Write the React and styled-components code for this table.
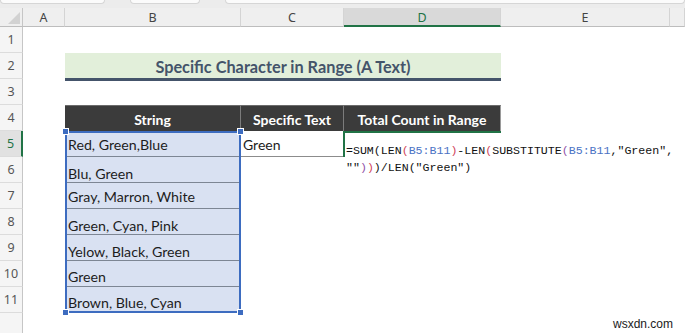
import React from 'react';
import styled, { createGlobalStyle, css } from 'styled-components';

const Global = createGlobalStyle`
  html, body { margin: 0; padding: 0; background: #fff; }
  body { width: 685px; height: 333px; overflow: hidden; font-family: Lato, "Open Sans", sans-serif; }
`;

const Page = styled.div`
  position: relative;
  width: 685px;
  height: 333px;
  overflow: hidden;
  background: #fff;
`;

const TopStrip = styled.div`
  height: 8px;
  background: #ececec;
  display: grid;
  grid-template-columns: 105px 70px 1fr;
  column-gap: 25px;
  align-items: start;
  box-sizing: border-box;
`;

const TopBox = styled.div`
  height: 3px;
  background: #fbfbfb;
  border: 1px solid #d6d6d6;
  border-top: none;
  border-radius: 0 0 4px 4px;
`;

const Sheet = styled.div`
  display: grid;
  grid-template-columns: 23px 42px 176px 103px 157px 169px 1fr;
  grid-template-rows: 19px;
  grid-auto-rows: 26px;
`;

const headFont = css`
  font-family: "Noto Sans", "Open Sans", sans-serif;
  font-size: 12.5px;
`;

const Corner = styled.div`
  position: relative;
  background: #efefef;
  border-right: 1px solid #c6c6c6;
  border-bottom: 1px solid #bdbdbd;
  box-sizing: border-box;
  &::after {
    content: '';
    position: absolute;
    right: 2px;
    bottom: 2px;
    width: 0;
    height: 0;
    border-left: 12px solid transparent;
    border-bottom: 12px solid #d2d2d2;
  }
`;

const ColHead = styled.div`
  ${headFont};
  display: flex;
  align-items: center;
  justify-content: center;
  box-sizing: border-box;
  background: ${(p) => (p.$active ? '#d9d9d9' : '#efefef')};
  color: ${(p) => (p.$active ? '#217346' : '#444')};
  border-right: 1px solid #d4d4d4;
  border-bottom: ${(p) => (p.$active ? '2px solid #217346' : '1px solid #bdbdbd')};
  padding-top: 1px;
`;

const RowHead = styled.div`
  ${headFont};
  display: flex;
  align-items: center;
  justify-content: center;
  box-sizing: border-box;
  background: ${(p) => (p.$active ? '#e1e1e1' : '#f5f5f5')};
  color: ${(p) => (p.$active ? '#217346' : '#555')};
  border-right: ${(p) => (p.$active ? '2px solid #217346' : '1px solid #c6c6c6')};
  border-bottom: 1px solid #dcdcdc;
`;

const Blank = styled.div``;

const Title = styled.div`
  grid-column: span 3;
  align-self: start;
  height: 28px;
  box-sizing: border-box;
  background: #e2efda;
  border-bottom: 3px solid #44546a;
  color: #44546a;
  font-family: Lato, sans-serif;
  font-weight: 700;
  font-size: 16.3px;
  display: flex;
  align-items: center;
  justify-content: center;
  padding-top: 1px;
`;

const HeadCell = styled.div`
  background: #3b3b3b;
  color: #fff;
  font-family: Lato, sans-serif;
  font-weight: 700;
  font-size: 14px;
  display: flex;
  align-items: center;
  justify-content: center;
  box-sizing: border-box;
  border-top: 1px solid #6b6b6b;
  border-right: 1px solid ${(p) => (p.$last ? '#9a9a9a' : '#7c7c7c')};
  padding-top: 1px;
`;

const StringBlock = styled.div`
  grid-row: span 7;
  position: relative;
  display: flex;
  flex-direction: column;
  background: #d9e1f2;
  &::after {
    content: '';
    position: absolute;
    inset: 0;
    border: 2px solid #3d6cc0;
    pointer-events: none;
  }
`;

const StrRow = styled.div`
  height: 26px;
  box-sizing: border-box;
  display: flex;
  align-items: flex-end;
  padding: 0 0 ${(p) => p.$pb}px 3px;
  border-bottom: ${(p) => (p.$last ? 'none' : '1px solid #7d8694')};
  font-family: Lato, sans-serif;
  font-size: 14.2px;
  line-height: 17px;
  color: #1d1d1d;
`;

const Handle = styled.span`
  position: absolute;
  width: 5px;
  height: 5px;
  background: #3d6cc0;
  border: 1px solid #fff;
  z-index: 2;
  ${(p) => (p.$top ? 'top: -3px;' : 'bottom: -3px;')}
  ${(p) => (p.$left ? 'left: -3px;' : 'right: -3px;')}
`;

const ValueCell = styled.div`
  box-sizing: border-box;
  border-bottom: 1px solid #8c8c8c;
  display: flex;
  align-items: center;
  padding: 1px 0 0 2px;
  font-family: Lato, sans-serif;
  font-size: 14px;
  color: #1d1d1d;
`;

const ActiveCell = styled.div`
  position: relative;
  z-index: 1;
  box-sizing: border-box;
  border-top: 2px solid #217346;
  border-left: 2px solid #217346;
  margin-left: -1px;
  padding: 9px 0 0 1px;
`;

const Formula = styled.div`
  font-family: "Liberation Mono", "DejaVu Sans Mono", monospace;
  font-size: 11.6px;
  line-height: 17px;
  white-space: pre;
  color: #111;
`;

const Tok = styled.span`
  color: ${(p) => p.$c || '#111'};
`;

const Watermark = styled.div`
  position: absolute;
  right: 12px;
  bottom: 2px;
  font-family: "Liberation Sans", Arial, sans-serif;
  font-size: 12px;
  color: #1a1a1a;
`;

const RED = '#d0435a';
const BLUE = '#4a72c4';
const PURPLE = '#9050a8';

const cols = ['A', 'B', 'C', 'D', 'E', 'F'];

const strings = [
  ['Red, Green,Blue', 3],
  ['Blu, Green', 0],
  ['Gray, Marron, White', 3],
  ['Green, Cyan, Pink', 0],
  ['Yelow, Black, Green', 0],
  ['Green', 1],
  ['Brown, Blue, Cyan', 2],
];

function Blanks({ n }) {
  return Array.from({ length: n }, (_, i) => <Blank key={i} />);
}

export default function App() {
  return (
    <>
      <Global />
      <Page>
        <TopStrip>
          <TopBox />
          <TopBox />
          <TopBox />
        </TopStrip>
        <Sheet>
          <Corner />
          {cols.map((c) => (
            <ColHead key={c} $active={c === 'D'}>
              {c === 'F' ? '' : c}
            </ColHead>
          ))}

          <RowHead>1</RowHead>
          <Blanks n={6} />

          <RowHead>2</RowHead>
          <Blank />
          <Title>Specific Character in Range (A Text)</Title>
          <Blanks n={2} />

          <RowHead>3</RowHead>
          <Blanks n={6} />

          <RowHead>4</RowHead>
          <Blank />
          <HeadCell>String</HeadCell>
          <HeadCell>Specific Text</HeadCell>
          <HeadCell $last>Total Count in Range</HeadCell>
          <Blanks n={2} />

          <RowHead $active>5</RowHead>
          <Blank />
          <StringBlock>
            {strings.map(([s, pb], i) => (
              <StrRow key={s} $pb={pb} $last={i === strings.length - 1}>
                {s}
              </StrRow>
            ))}
            <Handle $top $left />
            <Handle $top />
            <Handle $left />
            <Handle />
          </StringBlock>
          <ValueCell>Green</ValueCell>
          <ActiveCell>
            <Formula>
              <Tok>=SUM(LEN</Tok>
              <Tok $c={RED}>(</Tok>
              <Tok $c={BLUE}>B5:B11</Tok>
              <Tok $c={RED}>)</Tok>
              <Tok>-LEN</Tok>
              <Tok $c={RED}>(</Tok>
              <Tok>SUBSTITUTE</Tok>
              <Tok $c={PURPLE}>(</Tok>
              <Tok $c={BLUE}>B5:B11</Tok>
              <Tok>,"Green",{'\n'}""</Tok>
              <Tok $c={PURPLE}>)</Tok>
              <Tok $c={RED}>)</Tok>
              <Tok>)/LEN("Green")</Tok>
            </Formula>
          </ActiveCell>
          <Blanks n={2} />

          {[6, 7, 8, 9, 10, 11].map((r) => (
            <React.Fragment key={r}>
              <RowHead>{r}</RowHead>
              <Blank />
              <Blanks n={4} />
            </React.Fragment>
          ))}

          <RowHead />
          <Blanks n={6} />
        </Sheet>
        <Watermark>wsxdn.com</Watermark>
      </Page>
    </>
  );
}
